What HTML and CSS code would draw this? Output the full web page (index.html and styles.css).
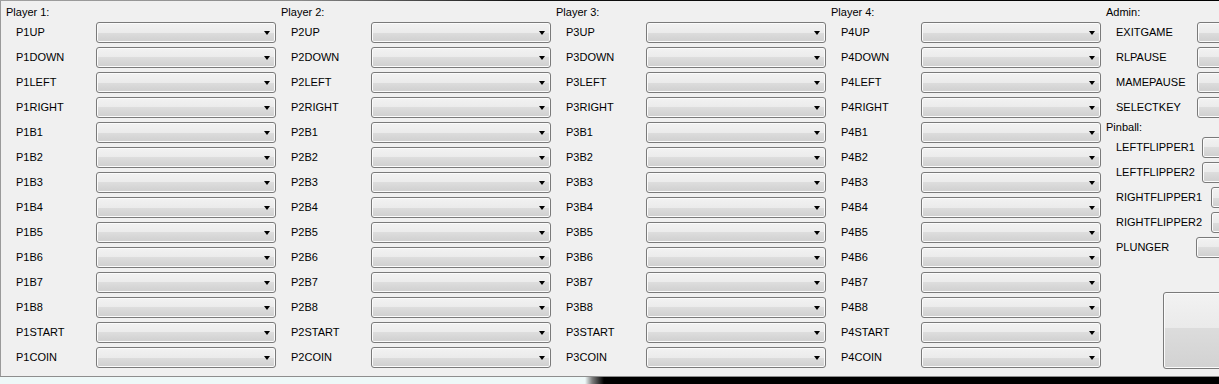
FILE: index.html
```html
<!DOCTYPE html>
<html>
<head>
<meta charset="utf-8">
<link rel="stylesheet" href="styles.css">
</head>
<body>
<div class="screen">
  <div class="topline"></div>
  <div class="window">
    <div class="col">
      <div class="title">Player 1:</div>
      <div class="row"><span class="lbl">P1UP</span><div class="combo"><i class="arrow"></i></div></div>
      <div class="row"><span class="lbl">P1DOWN</span><div class="combo"><i class="arrow"></i></div></div>
      <div class="row"><span class="lbl">P1LEFT</span><div class="combo"><i class="arrow"></i></div></div>
      <div class="row"><span class="lbl">P1RIGHT</span><div class="combo"><i class="arrow"></i></div></div>
      <div class="row"><span class="lbl">P1B1</span><div class="combo"><i class="arrow"></i></div></div>
      <div class="row"><span class="lbl">P1B2</span><div class="combo"><i class="arrow"></i></div></div>
      <div class="row"><span class="lbl">P1B3</span><div class="combo"><i class="arrow"></i></div></div>
      <div class="row"><span class="lbl">P1B4</span><div class="combo"><i class="arrow"></i></div></div>
      <div class="row"><span class="lbl">P1B5</span><div class="combo"><i class="arrow"></i></div></div>
      <div class="row"><span class="lbl">P1B6</span><div class="combo"><i class="arrow"></i></div></div>
      <div class="row"><span class="lbl">P1B7</span><div class="combo"><i class="arrow"></i></div></div>
      <div class="row"><span class="lbl">P1B8</span><div class="combo"><i class="arrow"></i></div></div>
      <div class="row"><span class="lbl">P1START</span><div class="combo"><i class="arrow"></i></div></div>
      <div class="row"><span class="lbl">P1COIN</span><div class="combo"><i class="arrow"></i></div></div>
    </div>
    <div class="col">
      <div class="title">Player 2:</div>
      <div class="row"><span class="lbl">P2UP</span><div class="combo"><i class="arrow"></i></div></div>
      <div class="row"><span class="lbl">P2DOWN</span><div class="combo"><i class="arrow"></i></div></div>
      <div class="row"><span class="lbl">P2LEFT</span><div class="combo"><i class="arrow"></i></div></div>
      <div class="row"><span class="lbl">P2RIGHT</span><div class="combo"><i class="arrow"></i></div></div>
      <div class="row"><span class="lbl">P2B1</span><div class="combo"><i class="arrow"></i></div></div>
      <div class="row"><span class="lbl">P2B2</span><div class="combo"><i class="arrow"></i></div></div>
      <div class="row"><span class="lbl">P2B3</span><div class="combo"><i class="arrow"></i></div></div>
      <div class="row"><span class="lbl">P2B4</span><div class="combo"><i class="arrow"></i></div></div>
      <div class="row"><span class="lbl">P2B5</span><div class="combo"><i class="arrow"></i></div></div>
      <div class="row"><span class="lbl">P2B6</span><div class="combo"><i class="arrow"></i></div></div>
      <div class="row"><span class="lbl">P2B7</span><div class="combo"><i class="arrow"></i></div></div>
      <div class="row"><span class="lbl">P2B8</span><div class="combo"><i class="arrow"></i></div></div>
      <div class="row"><span class="lbl">P2START</span><div class="combo"><i class="arrow"></i></div></div>
      <div class="row"><span class="lbl">P2COIN</span><div class="combo"><i class="arrow"></i></div></div>
    </div>
    <div class="col">
      <div class="title">Player 3:</div>
      <div class="row"><span class="lbl">P3UP</span><div class="combo"><i class="arrow"></i></div></div>
      <div class="row"><span class="lbl">P3DOWN</span><div class="combo"><i class="arrow"></i></div></div>
      <div class="row"><span class="lbl">P3LEFT</span><div class="combo"><i class="arrow"></i></div></div>
      <div class="row"><span class="lbl">P3RIGHT</span><div class="combo"><i class="arrow"></i></div></div>
      <div class="row"><span class="lbl">P3B1</span><div class="combo"><i class="arrow"></i></div></div>
      <div class="row"><span class="lbl">P3B2</span><div class="combo"><i class="arrow"></i></div></div>
      <div class="row"><span class="lbl">P3B3</span><div class="combo"><i class="arrow"></i></div></div>
      <div class="row"><span class="lbl">P3B4</span><div class="combo"><i class="arrow"></i></div></div>
      <div class="row"><span class="lbl">P3B5</span><div class="combo"><i class="arrow"></i></div></div>
      <div class="row"><span class="lbl">P3B6</span><div class="combo"><i class="arrow"></i></div></div>
      <div class="row"><span class="lbl">P3B7</span><div class="combo"><i class="arrow"></i></div></div>
      <div class="row"><span class="lbl">P3B8</span><div class="combo"><i class="arrow"></i></div></div>
      <div class="row"><span class="lbl">P3START</span><div class="combo"><i class="arrow"></i></div></div>
      <div class="row"><span class="lbl">P3COIN</span><div class="combo"><i class="arrow"></i></div></div>
    </div>
    <div class="col">
      <div class="title">Player 4:</div>
      <div class="row"><span class="lbl">P4UP</span><div class="combo"><i class="arrow"></i></div></div>
      <div class="row"><span class="lbl">P4DOWN</span><div class="combo"><i class="arrow"></i></div></div>
      <div class="row"><span class="lbl">P4LEFT</span><div class="combo"><i class="arrow"></i></div></div>
      <div class="row"><span class="lbl">P4RIGHT</span><div class="combo"><i class="arrow"></i></div></div>
      <div class="row"><span class="lbl">P4B1</span><div class="combo"><i class="arrow"></i></div></div>
      <div class="row"><span class="lbl">P4B2</span><div class="combo"><i class="arrow"></i></div></div>
      <div class="row"><span class="lbl">P4B3</span><div class="combo"><i class="arrow"></i></div></div>
      <div class="row"><span class="lbl">P4B4</span><div class="combo"><i class="arrow"></i></div></div>
      <div class="row"><span class="lbl">P4B5</span><div class="combo"><i class="arrow"></i></div></div>
      <div class="row"><span class="lbl">P4B6</span><div class="combo"><i class="arrow"></i></div></div>
      <div class="row"><span class="lbl">P4B7</span><div class="combo"><i class="arrow"></i></div></div>
      <div class="row"><span class="lbl">P4B8</span><div class="combo"><i class="arrow"></i></div></div>
      <div class="row"><span class="lbl">P4START</span><div class="combo"><i class="arrow"></i></div></div>
      <div class="row"><span class="lbl">P4COIN</span><div class="combo"><i class="arrow"></i></div></div>
    </div>
    <div class="col col-admin">
      <div class="title">Admin:</div>
      <div class="row"><span class="lbl lbl-admin">EXITGAME</span><div class="btn"></div></div>
      <div class="row"><span class="lbl lbl-admin">RLPAUSE</span><div class="btn"></div></div>
      <div class="row"><span class="lbl lbl-admin">MAMEPAUSE</span><div class="btn"></div></div>
      <div class="row"><span class="lbl lbl-admin">SELECTKEY</span><div class="btn"></div></div>
      <div class="title title-pin">Pinball:</div>
      <div class="row"><span class="lbl lbl-lf">LEFTFLIPPER1</span><div class="btn"></div></div>
      <div class="row"><span class="lbl lbl-lf">LEFTFLIPPER2</span><div class="btn"></div></div>
      <div class="row"><span class="lbl lbl-rf">RIGHTFLIPPER1</span><div class="btn"></div></div>
      <div class="row"><span class="lbl lbl-rf">RIGHTFLIPPER2</span><div class="btn"></div></div>
      <div class="row"><span class="lbl lbl-pl">PLUNGER</span><div class="btn"></div></div>
      <div class="bigbtn"></div>
    </div>
  </div>
  <div class="desk"></div>
</div>
</body>
</html>
```

FILE: styles.css
```css
html, body {
  margin: 0;
  padding: 0;
}
body {
  width: 1219px;
  height: 384px;
  overflow: hidden;
  background: #eef8f8;
  font-family: "Liberation Sans", Arial, sans-serif;
  font-size: 11px;
  color: #000;
}
.screen {
  width: 1219px;
  height: 384px;
  overflow: hidden;
}
.topline {
  height: 1px;
  background: linear-gradient(to right, #a0a0a0 0, #8a8a8a 300px, #101010 520px, #000 100%);
}
.window {
  height: 375px;
  background: #f0f0f0;
  border-bottom: 1px solid #8e8e8e;
  box-shadow: inset 1px 0 0 #9a9a9a;
  display: flex;
  overflow: hidden;
}
.col {
  flex: 0 0 275px;
  width: 275px;
  display: flex;
  flex-direction: column;
}
.col-admin {
  flex: 0 0 200px;
  width: 200px;
}
.title {
  height: 21px;
  box-sizing: border-box;
  padding: 2px 0 0 6px;
  line-height: 19px;
  white-space: nowrap;
}
.title-pin {
  height: 19px;
  margin-top: -4px;
  padding-top: 0;
}
.row {
  height: 21px;
  margin-bottom: 4px;
  padding-left: 16px;
  display: flex;
  align-items: center;
}
.lbl {
  flex: 0 0 80px;
  width: 80px;
  line-height: 21px;
  white-space: nowrap;
}
.lbl-admin { flex-basis: 81px; width: 81px; }
.lbl-lf { flex-basis: 86px; width: 86px; }
.lbl-rf { flex-basis: 95px; width: 95px; }
.lbl-pl { flex-basis: 80px; width: 80px; }

.combo, .btn, .bigbtn {
  box-sizing: border-box;
  border: 1px solid #7a7a7a;
  border-radius: 3px;
  box-shadow: inset 0 0 0 1px #fbfbfb;
  background: linear-gradient(to bottom, #f2f2f2 0%, #ebebeb 50%, #dddddd 50%, #cfcfcf 100%);
}
.combo {
  width: 180px;
  height: 21px;
  position: relative;
  flex: 0 0 180px;
}
.arrow {
  position: absolute;
  right: 5px;
  top: 8px;
  width: 0;
  height: 0;
  border-left: 3.5px solid transparent;
  border-right: 3.5px solid transparent;
  border-top: 4px solid #000;
}
.btn {
  flex: 0 0 80px;
  width: 80px;
  height: 21px;
}
.bigbtn {
  margin-top: 30px;
  margin-left: 63px;
  width: 120px;
  height: 77px;
  flex: 0 0 77px;
  background: linear-gradient(to bottom, #f2f2f2 0%, #eaeaea 47%, #dcdcdc 47%, #d2d2d2 100%);
}
.desk {
  height: 7px;
  background: linear-gradient(to right, #eef8f8 0, #eef8f8 585px, #808080 592px, #000 604px, #000 100%);
}
```
